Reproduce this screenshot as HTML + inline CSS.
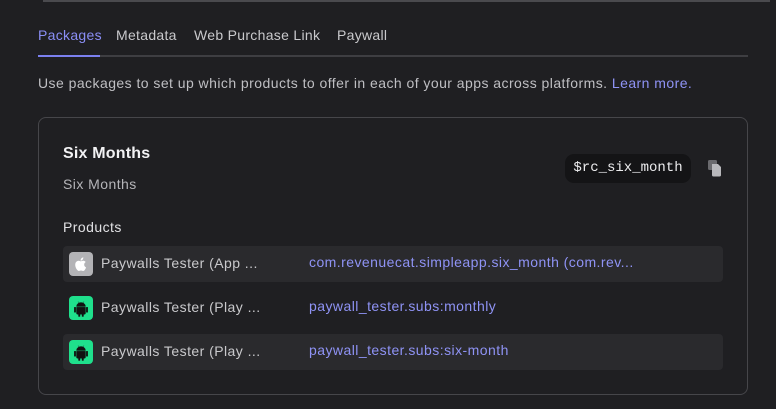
<!DOCTYPE html>
<html><head><style>
*{margin:0;padding:0;box-sizing:border-box}
body{width:776px;height:409px;background:#1f1f22;font-family:"Liberation Sans",sans-serif;color:#c9c9cc;position:relative;overflow:hidden;font-size:14px;letter-spacing:0.45px}
.abs{position:absolute}
.topline{left:43px;top:0;width:727px;height:2px;background:#4a4a4e}
.tabs{left:38px;top:27px;font-size:14px;white-space:nowrap;letter-spacing:0.3px}
.tabs span{position:absolute;top:0}
.tabline{left:38px;top:55px;width:710px;height:2px;background:#3e3e42}
.tabact{left:38px;top:55px;width:62px;height:2px;background:#7b80f0}
.card{left:38px;top:117px;width:710px;height:278px;border:1px solid #46464a;border-radius:8px}
.row{left:63px;width:660px;height:36px;border-radius:4px}
.ic{position:absolute;left:6px;top:6px;width:24px;height:24px;border-radius:4px}
.name{position:absolute;left:38px;top:9px;color:#c9c9cc}
.link{position:absolute;left:246px;top:8px;color:#8f93f5}
</style></head><body>
<div class="abs topline"></div>
<div class="abs tabs"><span style="left:0;color:#8a8ef5">Packages</span><span style="left:78px">Metadata</span><span style="left:156px">Web Purchase Link</span><span style="left:299px">Paywall</span></div>
<div class="abs tabline"></div><div class="abs tabact"></div>
<div class="abs" style="left:38px;top:75px;color:#bfbfc3">Use packages to set up which products to offer in each of your apps across platforms. <span style="color:#8f93f5">Learn more.</span></div>
<div class="abs card"></div>
<div class="abs" style="left:63px;top:145px;font-size:16px;font-weight:bold;color:#f2f2f4;letter-spacing:0.2px">Six Months</div>
<div class="abs" style="left:63px;top:176px;color:#b5b5b9">Six Months</div>
<div class="abs" style="left:565px;top:154px;width:126px;height:29px;background:#141416;border-radius:9px;font-family:'Liberation Mono',monospace;color:#ececee;font-size:14px;line-height:29px;text-align:center;letter-spacing:0">$rc_six_month</div>
<svg class="abs" style="left:707px;top:159px" width="16" height="18" viewBox="0 0 16 18"><rect x="1" y="1" width="9" height="10" rx="1.5" fill="#6a6a6e"/><path d="M5 5h6l3 3v8a1.5 1.5 0 0 1-1.5 1.5h-6A1.5 1.5 0 0 1 5 16z" fill="#b8b8bc"/></svg>
<div class="abs" style="left:63px;top:219px;color:#e0e0e3">Products</div>
<div class="abs row" style="top:246px;background:#2a2a2d"><div class="ic" style="background:#b3b3b6"><svg width="24" height="24" viewBox="0 0 24 24"><path d="M15.2 12.6c0-1.7 1.4-2.5 1.5-2.6-.8-1.2-2-1.300-2.4-1.3-1-.1-2 .6-2.5.6s-1.3-.6-2.2-.6c-1.1 0-2.2.7-2.800 1.7-1.2 2.1-.3 5.2.9 6.9.6.8 1.200 1.7 2.100 1.7.8 0 1.2-.5 2.2-.5s1.3.5 2.2.5 1.5-.8 2-1.7c.6-.9.9-1.8.9-1.900 0 0-1.9-.7-1.9-2.8zM13.6 7.6c.5-.6.8-1.4.7-2.2-.7 0-1.5.5-2 1.1-.4.5-.8 1.3-.7 2.1.8.1 1.5-.4 2-1z" fill="#fff"/></svg></div><div class="name">Paywalls Tester (App ...</div><div class="link">com.revenuecat.simpleapp.six_month (com.rev...</div></div>
<div class="abs row" style="top:290px"><div class="ic" style="background:#1fe08c"><svg width="24" height="24" viewBox="0 0 24 24"><path d="M7.5 10.5a4.5 4 0 0 1 9 0z M7.5 11.3h9v6a1 1 0 0 1-1 1h-7a1 1 0 0 1-1-1z M9.5 18h1.5v2.5H9.5z M13 18h1.5v2.5H13z M5.3 11.3h1.4v5H5.3z M17.3 11.3h1.4v5h-1.4z M9 5.5l1 1.5M15 5.5l-1 1.5" fill="#111" stroke="#111" stroke-width=".4"/></svg></div><div class="name">Paywalls Tester (Play ...</div><div class="link">paywall_tester.subs:monthly</div></div>
<div class="abs row" style="top:334px;background:#2a2a2d"><div class="ic" style="background:#1fe08c"><svg width="24" height="24" viewBox="0 0 24 24"><path d="M7.5 10.5a4.5 4 0 0 1 9 0z M7.5 11.3h9v6a1 1 0 0 1-1 1h-7a1 1 0 0 1-1-1z M9.5 18h1.5v2.5H9.5z M13 18h1.5v2.5H13z M5.3 11.3h1.4v5H5.3z M17.3 11.3h1.4v5h-1.4z M9 5.5l1 1.5M15 5.5l-1 1.5" fill="#111" stroke="#111" stroke-width=".4"/></svg></div><div class="name">Paywalls Tester (Play ...</div><div class="link">paywall_tester.subs:six-month</div></div>
</body></html>
